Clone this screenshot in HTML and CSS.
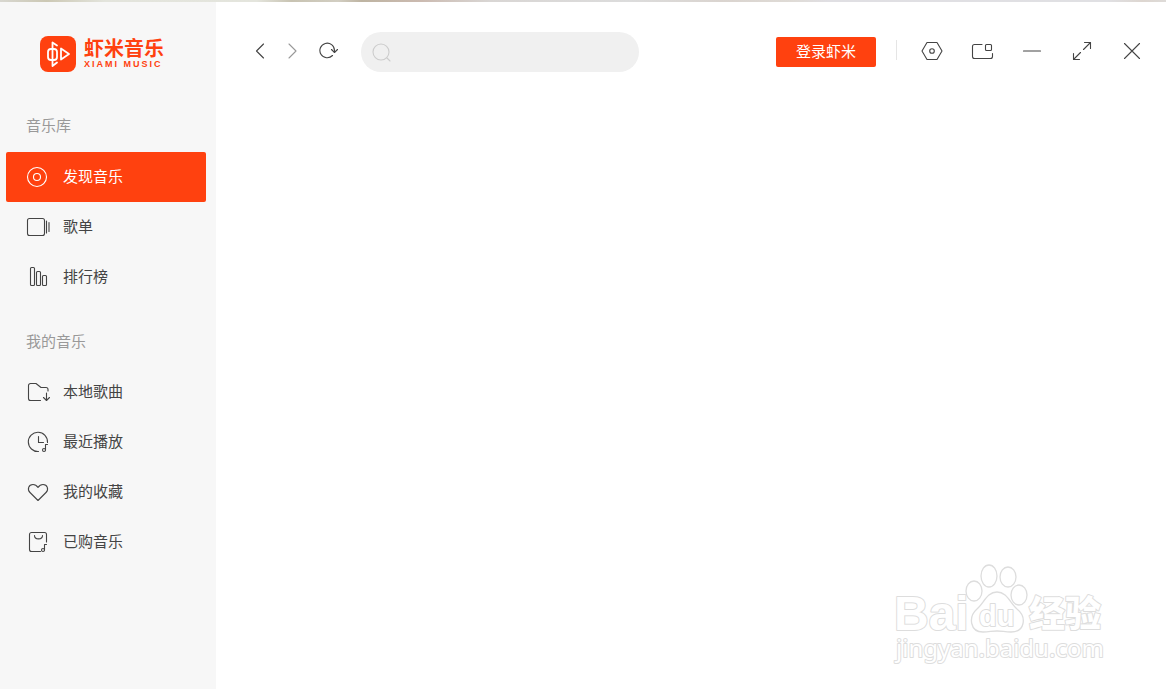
FILE: index.html
```html
<!DOCTYPE html>
<html lang="zh-CN">
<head>
  <meta charset="UTF-8">
  <title>虾米音乐</title>
  <link rel="stylesheet" href="styles.css">
</head>
<body>
  <div class="desktop-edge"></div>
  <div class="app">
    <aside class="sidebar">
      <a class="logo" href="#">
        <svg class="logo-mark" width="36" height="36" viewBox="0 0 36 36">
          <rect width="36" height="36" rx="8" fill="#ff410f"/>
          <g fill="none" stroke="#fff" stroke-width="1.8" stroke-linejoin="round" stroke-linecap="round">
            <path d="M17 9.500 12.500 6.500v23.500l4.500-3.500"/>
            <rect x="8" y="13" width="9" height="11" rx="3"/>
            <path d="M21 12.500v11l8-5.500z"/>
          </g>
        </svg>
        <span class="logo-text">
          <span class="logo-cn">虾米音乐</span>
          <span class="logo-en">XIAMI MUSIC</span>
        </span>
      </a>

      <nav class="group">
        <h2>音乐库</h2>
        <a class="item active" href="#">
          <svg class="icon" viewBox="0 0 24 24"><circle cx="11" cy="12" r="9.5"/><circle cx="11" cy="12" r="3.5"/></svg>
          <span>发现音乐</span>
        </a>
        <a class="item" href="#">
          <svg class="icon" viewBox="0 0 24 24"><rect x="1.5" y="3.5" width="17" height="17" rx="2"/><path d="M20.500 6v12M23 7.500v9"/></svg>
          <span>歌单</span>
        </a>
        <a class="item" href="#">
          <svg class="icon" viewBox="0 0 24 24"><rect x="4.500" y="2.500" width="4" height="18" rx="1"/><rect x="10.500" y="6.500" width="4" height="14" rx="1"/><rect x="16.500" y="10.500" width="4" height="10" rx="1"/></svg>
          <span>排行榜</span>
        </a>
      </nav>

      <nav class="group">
        <h2>我的音乐</h2>
        <a class="item" href="#">
          <svg class="icon" viewBox="0 0 24 24"><path d="M14.500 20.500h-10a2 2 0 0 1-2-2v-13a2 2 0 0 1 2-2h5.500l5 4h5a2 2 0 0 1 2 2v1.500M20.500 13v7.500M17.500 17.500l3 3 3-3"/></svg>
          <span>本地歌曲</span>
        </a>
        <a class="item" href="#">
          <svg class="icon" viewBox="0 0 24 24"><path d="M12.500 21.500a9.600 9.600 0 1 1 9-9M12.500 6.500v6h5M19.500 20v-5.500h2"/><circle cx="18" cy="20" r="1.500"/></svg>
          <span>最近播放</span>
        </a>
        <a class="item" href="#">
          <svg class="icon" viewBox="0 0 24 24"><path d="M12 20.500 4 12.500C1 9.500 2.500 4.500 7 4.500c2.500 0 4 1.500 5 3 1-1.500 2.500-3 5-3 4.500 0 6 5 3 8z"/></svg>
          <span>我的收藏</span>
        </a>
        <a class="item" href="#">
          <svg class="icon" viewBox="0 0 24 24"><path d="M14.500 21.500H5.500a2 2 0 0 1-2-2V4.500a2 2 0 0 1 2-2h13a2 2 0 0 1 2 2v7.500M8.500 5.500c0 4.500 8 4.500 8 0M18.500 20v-5.500h2"/><circle cx="17" cy="20" r="1.500"/></svg>
          <span>已购音乐</span>
        </a>
      </nav>
    </aside>

    <main class="main">
      <header class="toolbar">
        <div class="history">
          <button type="button" aria-label="后退"><svg viewBox="0 0 20 20"><path d="M13.500 3 6.500 10l7 7"/></svg></button>
          <button type="button" class="disabled" aria-label="前进"><svg viewBox="0 0 20 20"><path d="M7 3l7 7-7 7"/></svg></button>
          <button type="button" class="refresh" aria-label="刷新"><svg viewBox="0 0 20 20"><path d="M14.500 14.500a7.300 7.300 0 1 1 2-5v1.500M13.500 8.500l3 3 3-3"/></svg></button>
        </div>
        <label class="search">
          <svg viewBox="0 0 20 20"><circle cx="9" cy="10" r="8"/><path d="M15 16l3 3"/></svg>
          <input type="text" aria-label="搜索">
        </label>
        <div class="window-tools">
          <button type="button" class="login"><span>登录虾米</span></button>
          <span class="divider"></span>
          <button type="button" aria-label="设置"><svg viewBox="0 0 24 24"><path d="M7 3.500h10l5 8.500-5 8.500H7L2 12z"/><circle cx="12" cy="12" r="2.300"/></svg></button>
          <button type="button" aria-label="迷你模式"><svg viewBox="0 0 24 24"><path d="M12 5.500H4.500a2 2 0 0 0-2 2v10a2 2 0 0 0 2 2h16a2 2 0 0 0 2-2v-3"/><rect x="15.500" y="5.500" width="6" height="6" rx="1"/></svg></button>
          <button type="button" aria-label="最小化"><svg viewBox="0 0 24 24"><path d="M3.500 12h17"/></svg></button>
          <button type="button" aria-label="最大化"><svg viewBox="0 0 24 24"><path d="M13.500 10.500l7-7M14.500 3.500h6v6M10.500 13.500l-7 7M3.500 14.500v6h6"/></svg></button>
          <button type="button" aria-label="关闭"><svg viewBox="0 0 24 24"><path d="M4.500 4.500l15 15M19.500 4.500l-15 15"/></svg></button>
        </div>
      </header>

      <svg class="watermark" width="220" height="110" viewBox="0 0 220 110">
        <text class="wm-bai" x="4" y="70">Bai</text>
        <g class="paw">
          <ellipse cx="84" cy="31" rx="8" ry="10"/>
          <ellipse cx="99" cy="16" rx="8" ry="11"/>
          <ellipse cx="118" cy="17" rx="8" ry="10"/>
          <ellipse cx="129" cy="35" rx="8" ry="10"/>
          <path d="M107 32c-10 0-13 11-20 17-9 8-7 23 6 23 6 0 9-1 14-1s8 1 14 1c14 0 16-15 6-23-7-6-10-17-20-17z"/>
        </g>
        <text class="wm-du" x="89" y="66">du</text>
        <text class="wm-cn" x="139" y="67">经验</text>
        <text class="wm-url" x="6" y="97">jingyan.baidu.com</text>
      </svg>
    </main>
  </div>
</body>
</html>
```
FILE: styles.css
```css
* {
  box-sizing: border-box;
}
body {
  margin: 0;
  min-height: 100vh;
  display: flex;
  flex-direction: column;
  font-family: "Noto Sans CJK SC", sans-serif;
  font-size: 15px;
  color: #444;
  background: #fff;
}
a {
  color: inherit;
  text-decoration: none;
}
svg {
  display: block;
  flex: none;
}
button {
  padding: 0;
  border: 0;
  background: none;
  color: #444;
  font: inherit;
}
.desktop-edge {
  height: 2px;
  background: linear-gradient(90deg, #d8d7d0 0%, #ccc8b4 4%, #e3e4dc 9%, #e4e5dd 22%, #c8c3b2 25%, #d2cec2 29%, #beb4a2 31%, #cbbab0 36%, #d9d6d4 42%, #dcdcdc 54%, #dad4cf 62%, #dfdbd6 68%, #e0dfe3 71%, #e0e0e3 95%, #ddd6d0 98%, #dedbd8 100%);
}
.app {
  flex: 1;
  display: flex;
}

/* sidebar */
.sidebar {
  width: 216px;
  flex: none;
  padding: 34px 10px 0 6px;
  background: #f7f7f7;
}
.logo {
  display: flex;
  gap: 8px;
  height: 36px;
  margin: 0 0 27px 34px;
  color: #ff410f;
}
.logo-text {
  display: flex;
  flex-direction: column;
  white-space: nowrap;
}
.logo-cn {
  font-size: 20px;
  line-height: 24px;
  font-weight: bold;
}
.logo-en {
  font-family: "Liberation Sans", sans-serif;
  font-size: 9px;
  line-height: 9px;
  font-weight: bold;
  letter-spacing: 2px;
}
.group {
  margin-bottom: 13px;
}
.group h2 {
  margin: 0;
  padding: 0 0 1px 20px;
  font-size: 15px;
  line-height: 52px;
  font-weight: normal;
  color: #999;
}
.group + .group h2 {
  line-height: 51px;
}
.item {
  display: flex;
  align-items: center;
  gap: 13px;
  height: 50px;
  padding-left: 20px;
  border-radius: 2px;
}
.item span {
  padding-bottom: 3px;
}
.item.active {
  background: #ff410f;
  color: #fff;
}
.icon {
  width: 24px;
  height: 24px;
}
.icon,
.toolbar svg {
  fill: none;
  stroke: currentColor;
  stroke-width: 1.1;
  stroke-linecap: round;
  stroke-linejoin: round;
}

/* toolbar */
.main {
  flex: 1;
  position: relative;
}
.toolbar {
  display: flex;
  align-items: center;
  padding: 30px 22px 0 34px;
}
.history {
  display: flex;
  gap: 12px;
  padding-bottom: 2px;
}
.history svg {
  width: 20px;
  height: 20px;
}
.history .disabled {
  color: #999;
}
.history .refresh {
  margin-left: 4px;
}
.search {
  display: flex;
  align-items: center;
  gap: 8px;
  width: 278px;
  height: 40px;
  margin-left: 23px;
  padding: 0 16px 0 11px;
  border-radius: 20px;
  background: #f0f0f0;
  color: #ccc;
}
.search svg {
  width: 20px;
  height: 20px;
}
.search input {
  flex: 1;
  min-width: 0;
  border: 0;
  outline: 0;
  background: none;
  font: inherit;
  color: #333;
}
.window-tools {
  display: flex;
  align-items: center;
  gap: 26px;
  margin-left: auto;
}
.window-tools svg {
  width: 24px;
  height: 24px;
  margin-bottom: 2px;
}
.login {
  height: 30px;
  padding: 0 20px 3px;
  border-radius: 2px;
  background: #ff410f;
  color: #fff;
}
.divider {
  width: 1px;
  height: 20px;
  margin: 0 -3px 4px -6px;
  background: #e5e5e5;
}

/* watermark */
.watermark {
  position: absolute;
  right: 56px;
  bottom: 19px;
  fill: #fff;
  stroke: #ddd;
  stroke-width: 1.3;
}
.watermark text {
  stroke-width: 2;
  stroke-linejoin: round;
  paint-order: stroke;
}
.wm-bai {
  font: bold 48px "Liberation Sans", sans-serif;
}
.wm-du {
  font: bold 29px "Liberation Sans", sans-serif;
}
.wm-cn {
  font: 900 36px "Noto Sans CJK SC", sans-serif;
}
.wm-url {
  font: 24px "Noto Sans", sans-serif;
}
```
